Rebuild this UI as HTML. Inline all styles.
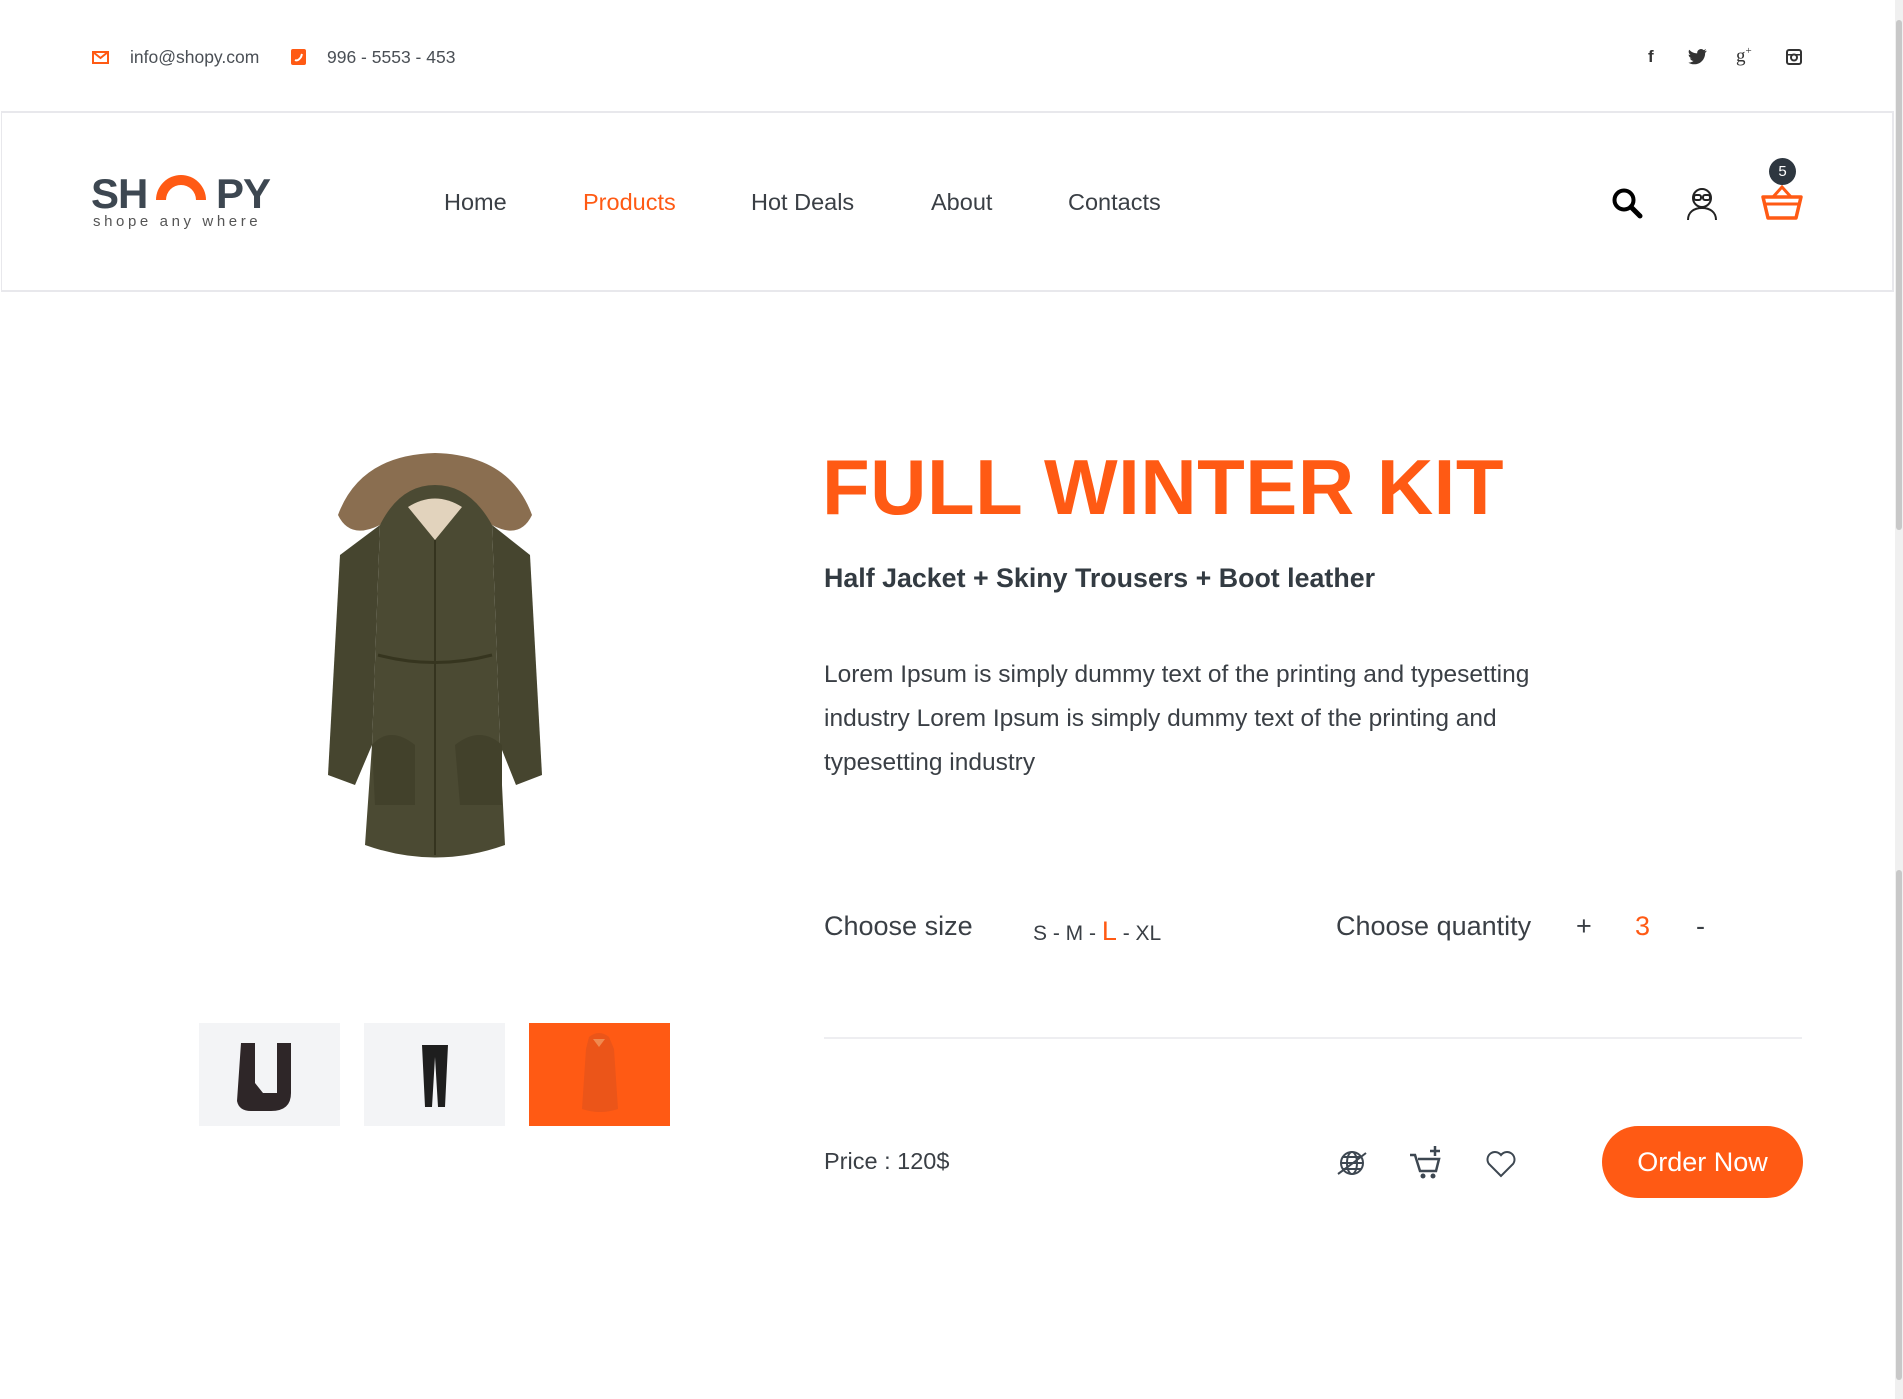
<!DOCTYPE html>
<html><head><meta charset="utf-8">
<style>
*{margin:0;padding:0;box-sizing:border-box}
html,body{width:1903px;height:1399px;overflow:hidden;background:#fff;font-family:"Liberation Sans",Arial,sans-serif;color:#3a3f45}
.abs{position:absolute}
.or{color:#ff5a14}
.top{font-size:17.5px;color:#4a4f55}
.nav{font-size:23.5px;color:#3a3f45;top:189px}
.nav.or{color:#ff5a14}
.thumb{position:absolute;top:1023px;width:141px;height:103px;background:#f3f4f6}
</style></head><body>
<div class="abs" style="right:0;top:0;width:8px;height:1399px;background:#f0f0f0"></div>
<div class="abs" style="right:1px;top:20px;width:6px;height:510px;background:#c8c8c8;border-radius:3px"></div>
<div class="abs" style="right:1px;top:870px;width:6px;height:510px;background:#c8c8c8;border-radius:3px"></div>

<svg class="abs" style="left:92px;top:51px" width="17" height="13" viewBox="0 0 17 13"><rect x="1" y="1" width="15" height="11" fill="none" stroke="#ff5a14" stroke-width="2"/><path d="M1 1l7.5 6L16 1" fill="none" stroke="#ff5a14" stroke-width="2"/></svg>
<div class="abs top" style="left:130px;top:47px">info@shopy.com</div>
<svg class="abs" style="left:291px;top:49px" width="15" height="16" viewBox="0 0 15 16"><rect width="15" height="16" rx="2" fill="#ff5a14"/><path d="M4 11c2 1 4 0 6-3l1-3" stroke="#fff" stroke-width="2" fill="none"/></svg>
<div class="abs top" style="left:327px;top:47px">996 - 5553 - 453</div>
<div class="abs" style="left:1648px;top:47px;font-size:17px;font-weight:bold;color:#333">f</div>
<svg class="abs" style="left:1688px;top:49px" width="20" height="16" viewBox="0 0 24 20"><path d="M23 2c-1 .5-2 .7-3 .8 1-.6 2-1.6 2-2.6-1 .6-2 1-3 1.2A4.8 4.8 0 0 0 11 5.5 13.5 13.5 0 0 1 1 1a4.8 4.8 0 0 0 1.5 6.4c-.8 0-1.5-.2-2.2-.6 0 2.3 1.7 4.3 3.9 4.7-.7.2-1.5.2-2.2.1.6 2 2.4 3.3 4.5 3.3A9.6 9.6 0 0 1 0 17c2 1.4 4.6 2.1 7.2 2.1 8.8 0 13.7-7.3 13.7-13.7v-.6C22 4 22.6 3 23 2z" fill="#333"/></svg>
<div class="abs" style="left:1736px;top:45px;font-size:19px;color:#333;font-family:'Liberation Serif',serif">g<sup style="font-size:11px">+</sup></div>
<svg class="abs" style="left:1786px;top:49px" width="16" height="16" viewBox="0 0 16 16"><rect x="1" y="1" width="14" height="14" rx="2" fill="none" stroke="#333" stroke-width="2"/><circle cx="8" cy="8.5" r="3" fill="none" stroke="#333" stroke-width="2"/><rect x="1" y="5" width="14" height="1.5" fill="#333"/></svg>

<div class="abs" style="left:1px;top:111px;width:1893px;height:181px;border:2px solid #e8e8ec;border-left-width:1px"></div>
<div class="abs" style="left:91px;top:170px;font-size:42px;font-weight:bold;color:#3d4751;letter-spacing:-1px">SH</div>
<svg class="abs" style="left:154px;top:172px" width="54" height="28" viewBox="0 0 54 28"><path d="M2 28A25 25 0 0 1 52 28H42A15 15 0 0 0 12 28Z" fill="#ff5a14"/><path d="M14 16l6-6h14l6 6" fill="none" stroke="#ff5a14" stroke-width="3"/></svg>
<div class="abs" style="left:216px;top:170px;font-size:42px;font-weight:bold;color:#3d4751;letter-spacing:-1px">PY</div>
<div class="abs" style="left:93px;top:213px;font-size:15px;color:#555;letter-spacing:3.6px">shope any where</div>
<div class="abs nav" style="left:444px">Home</div>
<div class="abs nav or" style="left:583px">Products</div>
<div class="abs nav" style="left:751px">Hot Deals</div>
<div class="abs nav" style="left:931px">About</div>
<div class="abs nav" style="left:1068px">Contacts</div>
<svg class="abs" style="left:1611px;top:187px" width="32" height="32" viewBox="0 0 32 32"><circle cx="13" cy="13" r="9.5" fill="none" stroke="#000" stroke-width="4"/><path d="M20 20l9 9" stroke="#000" stroke-width="5" stroke-linecap="round"/></svg>
<svg class="abs" style="left:1686px;top:186px" width="32" height="34" viewBox="0 0 32 34"><circle cx="16" cy="12" r="9" fill="none" stroke="#222" stroke-width="2"/><rect x="8" y="9" width="7" height="5" rx="2" fill="none" stroke="#222" stroke-width="2"/><rect x="17" y="9" width="7" height="5" rx="2" fill="none" stroke="#222" stroke-width="2"/><path d="M2 34c0-8 6-12 14-12s14 4 14 12" fill="none" stroke="#222" stroke-width="2"/></svg>
<svg class="abs" style="left:1761px;top:185px" width="42" height="35" viewBox="0 0 42 35"><path d="M12 12L21 2l9 10" fill="none" stroke="#ff5a14" stroke-width="3"/><path d="M2 12h38l-5 21H7Z" fill="none" stroke="#ff5a14" stroke-width="3.5" stroke-linejoin="round"/><path d="M5 19h32" stroke="#ff5a14" stroke-width="3"/></svg>
<div class="abs" style="left:1769px;top:158px;width:27px;height:27px;border-radius:50%;background:#2e3740;color:#fff;font-size:15px;text-align:center;line-height:27px">5</div>

<svg class="abs" style="left:320px;top:445px" width="230" height="420" viewBox="0 0 230 420">
<path d="M70 40Q115 10 160 40L172 80 180 300 185 400Q115 425 45 400L52 300 60 80Z" fill="#4b4a33"/>
<path d="M60 80L20 110 8 330 35 340 52 300Z" fill="#46452f"/>
<path d="M172 80L210 110 222 330 196 340 180 300Z" fill="#46452f"/>
<path d="M18 70Q40 10 115 8Q190 10 212 70Q200 95 172 80Q150 40 115 40Q80 40 60 80Q30 95 18 70Z" fill="#8a6e50"/>
<path d="M88 62L115 95 142 62Q115 45 88 62Z" fill="#e2d3bd"/>
<path d="M115 95V410" stroke="#35341f" stroke-width="2"/>
<path d="M52 300Q70 280 95 300V360H55Z" fill="#42412b"/>
<path d="M135 300Q160 280 182 300V360H140Z" fill="#42412b"/>
<path d="M58 210Q115 225 172 210" stroke="#36351f" stroke-width="3" fill="none"/>
</svg>

<div class="thumb" style="left:199px"><svg width="141" height="103" viewBox="0 0 141 103"><path d="M42 20h14v40l8 10h14V20h14v50q0 18-20 18H52q-12 0-14-10Z" fill="#2e2628"/></svg></div>
<div class="thumb" style="left:364px"><svg width="141" height="103" viewBox="0 0 141 103"><path d="M58 22h26l-3 62h-7l-3-50-3 50h-7Z" fill="#1e1e1e"/></svg></div>
<div class="thumb" style="left:529px;background:#ff5a14"><svg width="141" height="103" viewBox="0 0 141 103"><path d="M60 14Q70 6 80 14l5 12 4 60q-18 6-36 0l4-60Z" fill="#e9541a" opacity=".9"/><path d="M64 16L70 24 76 16" fill="#f08a50"/></svg></div>

<div class="abs or" style="left:822px;top:448px;font-size:78px;font-weight:bold;line-height:1;letter-spacing:0.5px">FULL WINTER KIT</div>
<div class="abs" style="left:824px;top:563px;font-size:26.8px;font-weight:bold;color:#333b42">Half Jacket + Skiny Trousers + Boot leather</div>
<div class="abs" style="left:824px;top:653px;width:710px;font-size:24.5px;line-height:44px;color:#3a3f45">Lorem Ipsum is simply dummy text of the printing and typesetting industry Lorem Ipsum is simply dummy text of the printing and typesetting industry</div>
<div class="abs" style="left:824px;top:911px;font-size:27px">Choose size</div>
<div class="abs" style="left:1033px;top:916px;font-size:21px;color:#3a3f45">S - M - <span class="or" style="font-size:27px">L</span> - XL</div>
<div class="abs" style="left:1336px;top:911px;font-size:27px">Choose quantity</div>
<div class="abs" style="left:1576px;top:911px;font-size:27px">+</div>
<div class="abs or" style="left:1635px;top:911px;font-size:27px">3</div>
<div class="abs" style="left:1696px;top:911px;font-size:27px">-</div>
<div class="abs" style="left:824px;top:1037px;width:978px;height:2px;background:#eeeef1"></div>
<div class="abs" style="left:824px;top:1148px;font-size:23.5px">Price : 120$</div>
<svg class="abs" style="left:1336px;top:1148px" width="32" height="30" viewBox="0 0 32 30"><circle cx="16" cy="15" r="11" fill="none" stroke="#3d4751" stroke-width="2"/><ellipse cx="16" cy="15" rx="5" ry="11" fill="none" stroke="#3d4751" stroke-width="2"/><path d="M5 15h22M7 9h18M7 21h18" stroke="#3d4751" stroke-width="2"/><path d="M2 26Q16 16 30 5" stroke="#3d4751" stroke-width="2" fill="none"/></svg>
<svg class="abs" style="left:1408px;top:1145px" width="36" height="36" viewBox="0 0 36 36"><path d="M2 10h5l5 16h16l3-12H10" fill="none" stroke="#3d4751" stroke-width="2.5"/><circle cx="15" cy="31" r="2.5" fill="#3d4751"/><circle cx="25" cy="31" r="2.5" fill="#3d4751"/><path d="M27 1v10M22 6h10" stroke="#3d4751" stroke-width="2.5"/></svg>
<svg class="abs" style="left:1485px;top:1150px" width="32" height="28" viewBox="0 0 32 28"><path d="M16 26L4 14A7 7 0 0 1 16 5A7 7 0 0 1 28 14Z" fill="none" stroke="#3d4751" stroke-width="2"/></svg>
<div class="abs" style="left:1602px;top:1126px;width:201px;height:72px;border-radius:36px;background:#ff5a14;color:#fff;font-size:27px;text-align:center;line-height:72px">Order Now</div>
</body></html>
